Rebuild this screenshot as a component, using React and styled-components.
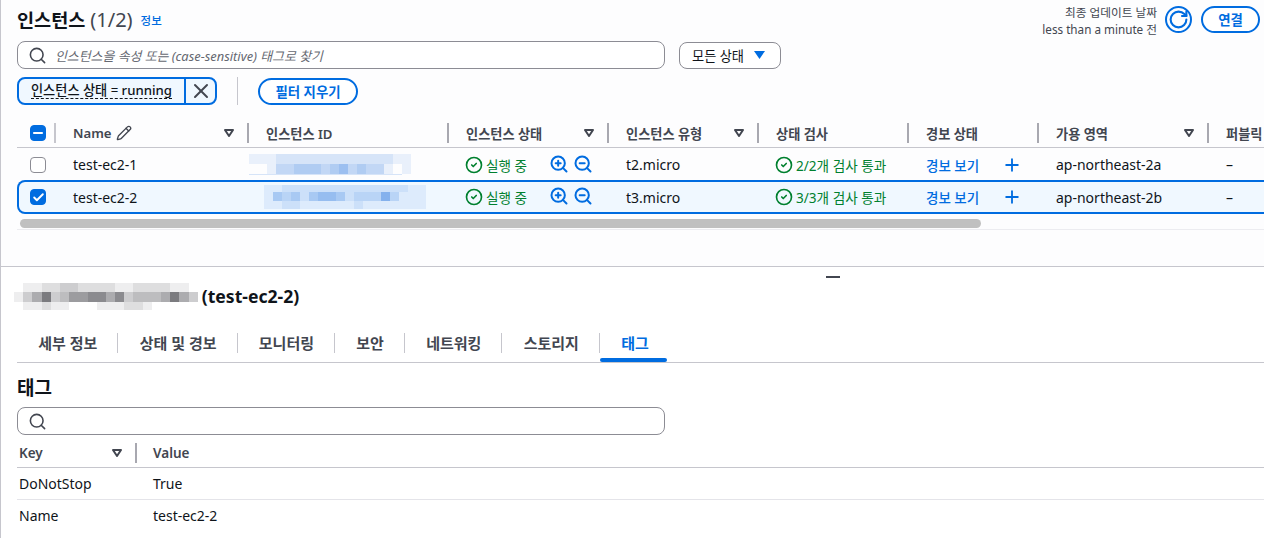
import React from "react";
import styled, { createGlobalStyle } from "styled-components";
import { Search, RotateCw, Pencil, ZoomIn, ZoomOut, CircleCheck, Plus, X, Check, Minus } from "lucide-react";

const BLUE = "#006ce0";
const GREEN = "#00802f";
const INK = "#0f141a";
const MUTED = "#424650";
const GRID = "39px 193px 200px 160px 150px 150px 130px 170px 180px";

const GlobalStyle = createGlobalStyle`
  html, body {
    margin: 0;
    padding: 0;
    background: #fff;
    overflow: hidden;
  }
  body {
    font-family: "Noto Sans", "Noto Sans CJK KR", sans-serif;
    font-size: 14px;
    color: ${INK};
  }
`;

const Page = styled.div`
  width: 1264px;
  height: 538px;
  overflow: hidden;
  box-sizing: border-box;
  border-left: 1px solid #c6c6cd;
`;

const TopPanel = styled.section`
  height: 267px;
  box-sizing: border-box;
  padding: 6px 0 0 16px;
  background: #fdfdfe;
  border-bottom: 1px solid #c6c6cd;
`;

const HeaderRow = styled.div`
  display: flex;
  align-items: center;
  justify-content: space-between;
  height: 26px;
  padding-right: 4px;
`;

const TitleGroup = styled.div`
  display: flex;
  align-items: center;
  gap: 8px;
  margin-top: 2px;
`;

const Title = styled.h1`
  margin: 0;
  font-size: 18.6px;
  line-height: 26px;
  font-weight: 700;
`;

const Count = styled.span`
  font-size: 20px;
  font-weight: 400;
  color: ${MUTED};
`;

const InfoLink = styled.a`
  font-size: 11.5px;
  font-weight: 500;
  color: ${BLUE};
`;

const Actions = styled.div`
  display: flex;
  align-items: center;
`;

const Updated = styled.div`
  font-size: 11.7px;
  line-height: 17px;
  color: ${MUTED};
  text-align: right;
  margin: 4px 8px 0 0;
`;

const RoundIcon = styled.div`
  width: 23px;
  height: 23px;
  border: 2px solid ${BLUE};
  border-radius: 50%;
  display: flex;
  align-items: center;
  justify-content: center;
  color: ${BLUE};
  margin-right: 9px;
`;

const PillButton = styled.button`
  height: 27px;
  width: ${(p) => p.$width}px;
  padding: 0;
  background: #fff;
  border: 2px solid ${BLUE};
  border-radius: 14px;
  color: ${BLUE};
  font: 700 13.4px "Noto Sans", "Noto Sans CJK KR", sans-serif;
`;

const SearchRow = styled.div`
  display: flex;
  align-items: center;
  gap: 14px;
  margin-top: 9px;
`;

const SearchBox = styled.div`
  width: 648px;
  height: 28px;
  box-sizing: border-box;
  border: 1px solid #8c8c94;
  border-radius: 8px;
  background: #fff;
  display: flex;
  align-items: center;
  padding-left: 10px;
  gap: 8px;
  color: ${MUTED};
  font-style: italic;
`;

const Placeholder = styled.span`
  color: #656871;
  font-size: 12.9px;
`;

const SelectButton = styled.div`
  width: 102px;
  height: 27px;
  box-sizing: border-box;
  border: 1px solid #8c8c94;
  border-radius: 8px;
  background: #fff;
  display: flex;
  align-items: center;
  justify-content: space-between;
  padding: 0 15px 0 12px;
  font-size: 13.2px;
  color: ${INK};
`;

const FilterRow = styled.div`
  display: flex;
  align-items: center;
  margin-top: 8px;
`;

const Token = styled.div`
  display: flex;
  width: 200px;
  height: 28px;
  box-sizing: border-box;
  border: 2px solid ${BLUE};
  border-radius: 8px;
  background: #f0f8ff;
`;

const TokenLabel = styled.div`
  flex: 1;
  display: flex;
  align-items: center;
  justify-content: center;
  border-right: 2px solid ${BLUE};
  font-size: 13.2px;
  font-weight: 500;
`;

const Dashed = styled.span`
  border-bottom: 1px dashed ${INK};
  line-height: 15px;
`;

const TokenClose = styled.div`
  width: 29px;
  display: flex;
  align-items: center;
  justify-content: center;
  color: ${MUTED};
`;

const FilterDivider = styled.div`
  width: 1px;
  height: 28px;
  background: #c6c6cd;
  margin: 0 20px;
`;

const Table = styled.div`
  margin-top: 14px;
  width: 1400px;
`;

const HeadRow = styled.div`
  display: grid;
  grid-template-columns: ${GRID};
  height: 26px;
  padding: 1px 0 1px;
  border-bottom: 1px solid #c6c6cd;
  align-items: center;
`;

const HeadCell = styled.div`
  display: flex;
  align-items: center;
  justify-content: space-between;
  height: 20px;
  box-sizing: border-box;
  padding: 0 13px 0 17px;
  border-right: 2px solid #a8a8b0;
  font-size: 13.2px;
  font-weight: 600;
  color: ${MUTED};
  white-space: nowrap;
  overflow: hidden;
`;

const HeadLabel = styled.span`
  display: flex;
  align-items: center;
  gap: 4px;
`;

const CheckCell = styled.div`
  display: flex;
  align-items: center;
  height: ${(p) => (p.$head ? "20px" : "auto")};
  padding-left: 13px;
  border-right: ${(p) => (p.$head ? "2px solid #c6c6cd" : "none")};
`;

const Box = styled.div`
  width: 16px;
  height: 16px;
  box-sizing: border-box;
  border-radius: 4px;
  display: flex;
  align-items: center;
  justify-content: center;
  color: #fff;
  background: ${(p) => (p.$on ? BLUE : "#fff")};
  border: 1px solid ${(p) => (p.$on ? BLUE : "#8c8c94")};
`;

const Row = styled.div`
  display: grid;
  grid-template-columns: ${GRID};
  align-items: center;
  box-sizing: border-box;
  height: ${(p) => (p.$selected ? "34px" : "32px")};
  padding-top: ${(p) => (p.$selected ? "0" : "1px")};
  background: ${(p) => (p.$selected ? "#f0f8ff" : "transparent")};
  box-shadow: ${(p) => (p.$selected ? `inset 0 0 0 2px ${BLUE}` : "none")};
  border-radius: ${(p) => (p.$selected ? "8px 0 0 8px" : "0")};
`;

const Cell = styled.div`
  padding-left: 17px;
  font-size: 14px;
  white-space: nowrap;
  display: flex;
  align-items: center;
  overflow: hidden;
`;

const IdCell = styled.div`
  padding-left: ${(p) => p.$pad}px;
`;

const Status = styled.span`
  display: inline-flex;
  align-items: center;
  gap: 3px;
  margin-left: -1px;
  color: ${GREEN};
  font-size: 13.6px;
`;

const ZoomGroup = styled.span`
  display: inline-flex;
  gap: 4px;
  margin: -2px 0 0 22px;
  color: ${BLUE};
`;

const BlueLink = styled.a`
  color: ${BLUE};
  font-size: 13.5px;
  font-weight: 500;
`;

const PlusIcon = styled.span`
  display: inline-flex;
  margin-left: 23px;
  color: ${BLUE};
`;

const ScrollTrack = styled.div`
  height: 9px;
  margin: 5px 0 0 3px;
  width: 961px;
  border-radius: 5px;
  background: #c0c0c0;
`;

const TrackLine = styled.div`
  height: 1px;
  margin-top: 1px;
  background: #ececf0;
`;

const MosaicGrid = styled.div`
  display: grid;
  grid-template-columns: repeat(${(p) => p.$cols}, ${(p) => p.$w}px);
  grid-template-rows: ${(p) => p.$tracks};
`;

const BottomPanel = styled.section`
  position: relative;
  padding: 15px 0 0 16px;
`;

const Handle = styled.div`
  position: absolute;
  left: 825px;
  top: 9px;
  width: 14px;
  height: 2px;
  background: ${MUTED};
`;

const DetailTitle = styled.div`
  display: flex;
  align-items: center;
  height: 28px;
  margin-left: -3px;
  gap: 4px;
  font-size: 17.6px;
  line-height: 26px;
  font-weight: 700;
`;

const Tabs = styled.div`
  display: flex;
  align-items: flex-start;
  height: 36px;
  box-sizing: border-box;
  margin-top: 17px;
  padding-top: 6px;
  border-bottom: 1px solid #c6c6cd;
`;

const Tab = styled.div`
  position: relative;
  height: 20px;
  line-height: 20px;
  padding: 0 20px 0 21.3px;
  font-size: 15px;
  font-weight: 600;
  color: ${(p) => (p.$active ? BLUE : MUTED)};
  white-space: nowrap;
  border-right: ${(p) => (p.$active ? "none" : "1px solid #c6c6cd")};
`;

const TabBar = styled.div`
  position: absolute;
  left: 0;
  bottom: -9px;
  width: 67px;
  height: 4px;
  border-radius: 2px;
  background: ${BLUE};
`;

const SectionTitle = styled.h2`
  margin: 15px 0 9px;
  font-size: 19px;
  line-height: 20px;
  font-weight: 700;
`;

const TagHead = styled.div`
  display: grid;
  grid-template-columns: 120px 1fr;
  height: 28px;
  margin-top: 4px;
  align-items: center;
  border-bottom: 1px solid #c6c6cd;
`;

const TagHeadCell = styled.div`
  display: flex;
  align-items: center;
  justify-content: space-between;
  height: 20px;
  box-sizing: border-box;
  padding: 0 ${(p) => p.$right || 0}px 0 ${(p) => p.$left}px;
  border-right: ${(p) => (p.$sep ? "2px solid #a8a8b0" : "none")};
  font-size: 13.5px;
  font-weight: 600;
  color: ${MUTED};
`;

const TagRow = styled.div`
  display: grid;
  grid-template-columns: 134px 1fr;
  height: ${(p) => (p.$last ? "30px" : "32px")};
  box-sizing: border-box;
  align-items: center;
  padding-left: 2px;
  font-size: 14px;
  border-bottom: ${(p) => (p.$last ? "none" : "1px solid #e4e4e9")};
`;

function Caret() {
  return (
    <svg width="10" height="8" viewBox="0 0 10 8" fill="none">
      <path d="M1 1h8L5 7z" stroke={MUTED} strokeWidth="2" strokeLinejoin="round" />
    </svg>
  );
}

function Mosaic({ rows, rgb, tracks, w = 9 }) {
  return (
    <MosaicGrid $cols={rows[0].length} $w={w} $tracks={tracks}>
      {rows.flatMap((row, r) =>
        row.split("").map((level, c) => (
          <div key={`${r}-${c}`} style={{ background: `rgba(${rgb}, ${Number(level) / 10})` }} />
        ))
      )}
    </MosaicGrid>
  );
}

const headers = [
  { label: "Name", pencil: true, caret: true },
  { label: "인스턴스 ID" },
  { label: "인스턴스 상태", caret: true },
  { label: "인스턴스 유형", caret: true },
  { label: "상태 검사" },
  { label: "경보 상태" },
  { label: "가용 영역", caret: true },
  { label: "퍼블릭" },
];

const instances = [
  {
    name: "test-ec2-1",
    type: "t2.micro",
    check: "2/2개 검사 통과",
    zone: "ap-northeast-2a",
    pad: 0,
    tracks: "10px 10px 1px",
    mosaic: ["111222222222222211", "001334443453433101", "222222222222222220"],
  },
  {
    name: "test-ec2-2",
    selected: true,
    type: "t3.micro",
    check: "3/3개 검사 통과",
    zone: "ap-northeast-2b",
    pad: 15,
    tracks: "7px 9px 8px",
    mosaic: ["112222222222222211", "143424554233363111", "112211111121111111"],
  },
];

const tabs = ["상태 및 경보", "모니터링", "보안", "네트워킹", "스토리지"];

export default function App() {
  return (
    <Page>
      <GlobalStyle />
      <TopPanel>
        <HeaderRow>
          <TitleGroup>
            <Title>
              인스턴스 <Count>(1/2)</Count>
            </Title>
            <InfoLink>정보</InfoLink>
          </TitleGroup>
          <Actions>
            <Updated>
              최종 업데이트 날짜
              <br />
              less than a minute 전
            </Updated>
            <RoundIcon>
              <RotateCw size={21} strokeWidth={2.4} />
            </RoundIcon>
            <PillButton $width={59}>연결</PillButton>
          </Actions>
        </HeaderRow>

        <SearchRow>
          <SearchBox>
            <Search size={19} strokeWidth={2} />
            <Placeholder>인스턴스을 속성 또는 (case-sensitive) 태그로 찾기</Placeholder>
          </SearchBox>
          <SelectButton>
            모든 상태
            <svg width="11" height="8" viewBox="0 0 11 8">
              <path d="M0 0h11L5.5 8z" fill={BLUE} />
            </svg>
          </SelectButton>
        </SearchRow>

        <FilterRow>
          <Token>
            <TokenLabel>
              <Dashed>인스턴스 상태 = running</Dashed>
            </TokenLabel>
            <TokenClose>
              <X size={24} strokeWidth={2} />
            </TokenClose>
          </Token>
          <FilterDivider />
          <PillButton $width={100}>필터 지우기</PillButton>
        </FilterRow>

        <Table>
          <HeadRow>
            <CheckCell $head>
              <Box $on>
                <Minus size={14} strokeWidth={3.2} />
              </Box>
            </CheckCell>
            {headers.map((h) => (
              <HeadCell key={h.label}>
                <HeadLabel>
                  {h.label}
                  {h.pencil && <Pencil size={16} strokeWidth={2} />}
                </HeadLabel>
                {h.caret && <Caret />}
              </HeadCell>
            ))}
          </HeadRow>

          {instances.map((item) => (
            <Row key={item.name} $selected={item.selected}>
              <CheckCell>
                <Box $on={item.selected}>{item.selected && <Check size={13} strokeWidth={3.5} />}</Box>
              </CheckCell>
              <Cell>{item.name}</Cell>
              <IdCell $pad={item.pad}>
                <Mosaic rows={item.mosaic} rgb="60, 130, 225" tracks={item.tracks} />
              </IdCell>
              <Cell>
                <Status>
                  <CircleCheck size={18} strokeWidth={2.2} />
                  실행 중
                </Status>
                <ZoomGroup>
                  <ZoomIn size={20} strokeWidth={2.4} />
                  <ZoomOut size={20} strokeWidth={2.4} />
                </ZoomGroup>
              </Cell>
              <Cell>{item.type}</Cell>
              <Cell>
                <Status>
                  <CircleCheck size={18} strokeWidth={2.2} />
                  {item.check}
                </Status>
              </Cell>
              <Cell>
                <BlueLink>경보 보기</BlueLink>
                <PlusIcon>
                  <Plus size={20} strokeWidth={2.2} />
                </PlusIcon>
              </Cell>
              <Cell>{item.zone}</Cell>
              <Cell>–</Cell>
            </Row>
          ))}
        </Table>
        <ScrollTrack />
        <TrackLine />
      </TopPanel>

      <BottomPanel>
        <Handle />
        <DetailTitle>
          <Mosaic
            rows={[
              "01122332222112222110",
              "13583466775734445853",
              "01121100011122100000",
            ]}
            rgb="90, 90, 95"
            tracks="9px 10px 8px"
            w={9.2}
          />
          (test-ec2-2)
        </DetailTitle>

        <Tabs>
          <Tab>세부 정보</Tab>
          {tabs.map((t) => (
            <Tab key={t}>{t}</Tab>
          ))}
          <Tab $active>
            태그
            <TabBar />
          </Tab>
        </Tabs>

        <SectionTitle>태그</SectionTitle>
        <SearchBox>
          <Search size={19} strokeWidth={2} />
        </SearchBox>

        <TagHead>
          <TagHeadCell $left={2} $right={13} $sep>
            Key
            <Caret />
          </TagHeadCell>
          <TagHeadCell $left={16}>Value</TagHeadCell>
        </TagHead>
        <TagRow>
          <span>DoNotStop</span>
          <span>True</span>
        </TagRow>
        <TagRow $last>
          <span>Name</span>
          <span>test-ec2-2</span>
        </TagRow>
      </BottomPanel>
    </Page>
  );
}
